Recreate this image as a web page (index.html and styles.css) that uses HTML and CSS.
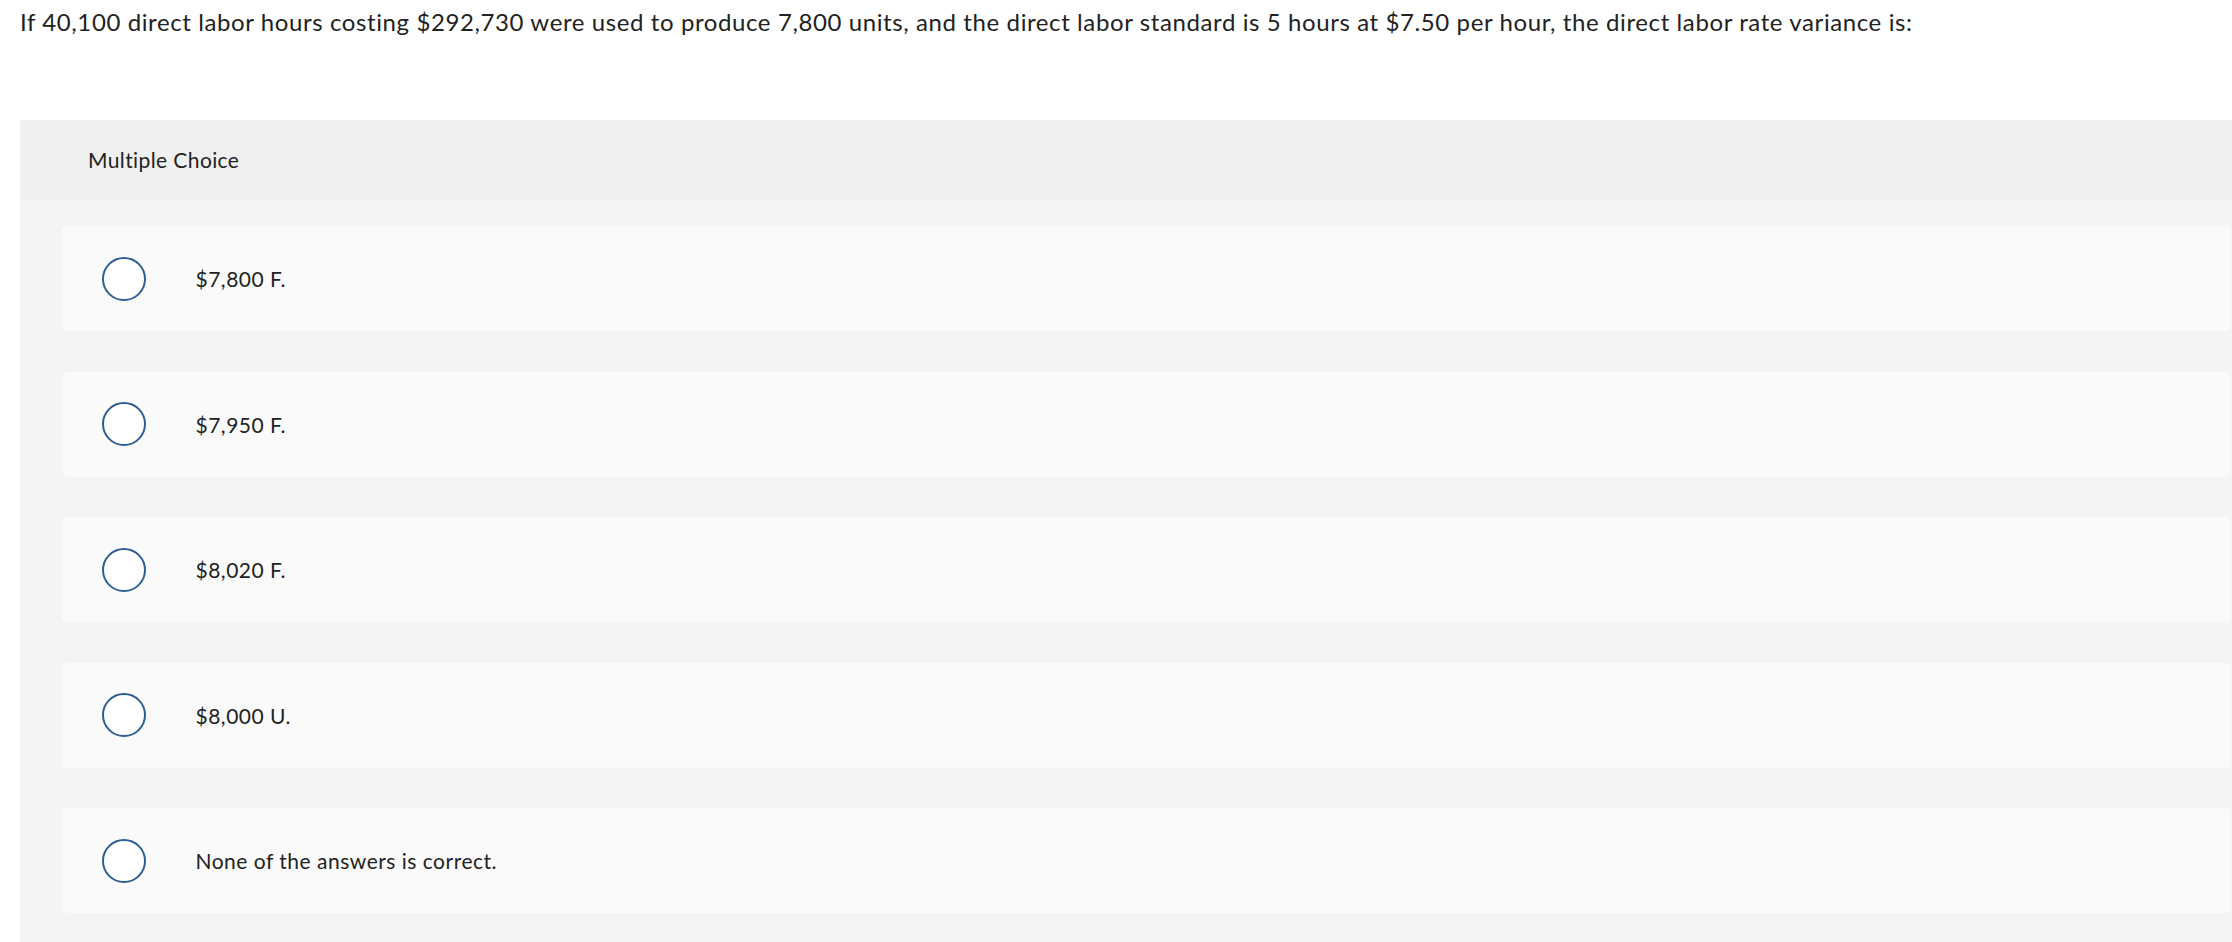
FILE: index.html
```html
<!DOCTYPE html>
<html>
<head>
<meta charset="utf-8">
<link rel="stylesheet" href="styles.css">
</head>
<body>
<p class="question">If 40,100 direct labor hours costing $292,730 were used to produce 7,800 units, and the direct labor standard is 5 hours at $7.50 per hour, the direct labor rate variance is:</p>
<div class="panel">
  <div class="panel-head">Multiple Choice</div>
  <div class="panel-body">
    <div class="choice"><span class="radio"></span><span class="label">$7,800 F.</span></div>
    <div class="choice"><span class="radio"></span><span class="label">$7,950 F.</span></div>
    <div class="choice"><span class="radio"></span><span class="label">$8,020 F.</span></div>
    <div class="choice"><span class="radio"></span><span class="label">$8,000 U.</span></div>
    <div class="choice"><span class="radio"></span><span class="label">None of the answers is correct.</span></div>
  </div>
</div>
</body>
</html>
```
FILE: styles.css
```css
html, body {
  margin: 0;
  padding: 0;
  background: #ffffff;
  font-family: "Lato", "Liberation Sans", sans-serif;
  color: #222222;
}
.question {
  margin: 0;
  padding: 8px 0 0 20px;
  font-size: 24px;
  letter-spacing: 0.6px;
  line-height: 28px;
  height: 120px;
  box-sizing: border-box;
}
.panel {
  margin-left: 20px;
  background: #f4f4f4;
  border-top-left-radius: 4px;
  overflow: hidden;
}
.panel-head {
  height: 80px;
  background: #f0f0f0;
  display: flex;
  align-items: center;
  padding-left: 68px;
  padding-bottom: 2px;
  box-sizing: border-box;
  font-size: 21px;
  letter-spacing: 0.4px;
}
.panel-body {
  padding: 26px 1px 30px 42px;
  display: flex;
  flex-direction: column;
  gap: 40.5px;
}
.choice {
  height: 105px;
  background: #fafafa;
  border-radius: 5px;
  display: flex;
  align-items: center;
  padding-left: 39.5px;
}
.radio {
  width: 44px;
  height: 44px;
  box-sizing: border-box;
  border: 2px solid #2e5d92;
  border-radius: 50%;
  background: #ffffff;
  flex: none;
}
.label {
  margin-left: 50px;
  font-size: 21px;
  letter-spacing: 0.5px;
}
```
